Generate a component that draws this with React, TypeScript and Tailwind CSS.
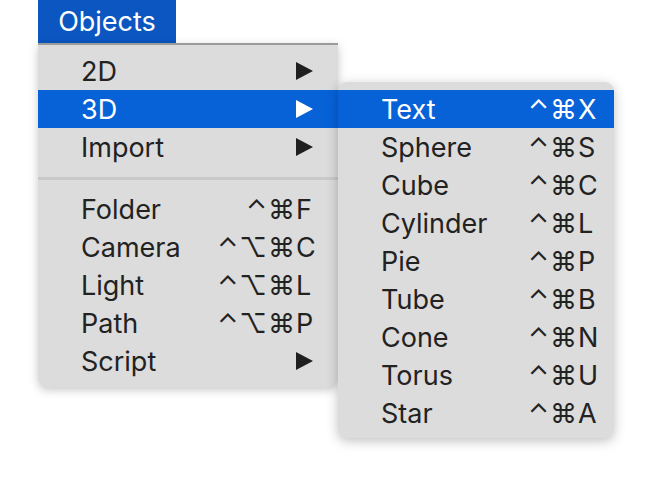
import React from "react";

const Arrow = ({ white }: { white?: boolean }) => (
  <svg width="17" height="18" viewBox="0 0 17 18" className="block">
    <path d="M0 0 L17 9 L0 18 Z" fill={white ? "#ffffff" : "#1f1f1f"} />
  </svg>
);

type Row = { label: string; mods?: string; key?: string; arrow?: boolean; active?: boolean };

const MainRow = ({ r }: { r: Row }) => (
  <div
    className={`h-[38px] flex items-center pl-[43px] pr-[19px] ${
      r.active ? "bg-[#0762d8] text-white" : "text-[#222222]"
    }`}
  >
    <span className="flex-1">{r.label}</span>
    {r.arrow ? (
      <span className="pr-[6px]">
        <Arrow white={r.active} />
      </span>
    ) : (
      <span className="flex items-center">
        <span className="text-right tracking-[1px]">{r.mods}</span>
        <span className="w-[23px] text-left">{r.key}</span>
      </span>
    )}
  </div>
);

const SubRow = ({ r }: { r: Row }) => (
  <div
    className={`h-[38px] flex items-center pl-[43px] pr-[13px] ${
      r.active ? "bg-[#0762d8] text-white" : "text-[#222222]"
    }`}
  >
    <span className="flex-1">{r.label}</span>
    <span className="flex items-center">
      <span className="text-right tracking-[1px]">{r.mods}</span>
      <span className="w-[23px] text-left">{r.key}</span>
    </span>
  </div>
);

export default function App() {
  const top: Row[] = [
    { label: "2D", arrow: true },
    { label: "3D", arrow: true, active: true },
    { label: "Import", arrow: true },
  ];
  const bottom: Row[] = [
    { label: "Folder", mods: "⌃⌘", key: "F" },
    { label: "Camera", mods: "⌃⌥⌘", key: "C" },
    { label: "Light", mods: "⌃⌥⌘", key: "L" },
    { label: "Path", mods: "⌃⌥⌘", key: "P" },
    { label: "Script", arrow: true },
  ];
  const sub: Row[] = [
    { label: "Text", mods: "⌃⌘", key: "X", active: true },
    { label: "Sphere", mods: "⌃⌘", key: "S" },
    { label: "Cube", mods: "⌃⌘", key: "C" },
    { label: "Cylinder", mods: "⌃⌘", key: "L" },
    { label: "Pie", mods: "⌃⌘", key: "P" },
    { label: "Tube", mods: "⌃⌘", key: "B" },
    { label: "Cone", mods: "⌃⌘", key: "N" },
    { label: "Torus", mods: "⌃⌘", key: "U" },
    { label: "Star", mods: "⌃⌘", key: "A" },
  ];
  return (
    <div className="w-[652px] h-[492px] bg-white overflow-hidden font-['Inter','DejaVu_Sans',sans-serif] text-[27px] leading-none">
      <div className="ml-[38px] w-[138px] h-[43px] bg-[#0b56c0] text-white flex items-center justify-center">
        Objects
      </div>
      <div className="flex items-start ml-[38px]">
        <div className="w-[300px] border-t-2 border-[#9b9b9b] bg-[#dcdcdc] rounded-b-[9px] shadow-[0_3px_10px_rgba(0,0,0,0.22)] pt-[7px] pb-[7px]">
          {top.map((r) => (
            <MainRow key={r.label} r={r} />
          ))}
          <div className="h-[24px] flex items-center">
            <div className="w-full h-[3px] bg-[#c9c9c9]" />
          </div>
          {bottom.map((r) => (
            <MainRow key={r.label} r={r} />
          ))}
        </div>
        <div className="relative z-10 mt-[39px] w-[276px] bg-[#dcdcdc] rounded-[9px] shadow-[0_3px_12px_rgba(0,0,0,0.25)] pt-[8px] pb-[6px] overflow-hidden">
          {sub.map((r) => (
            <SubRow key={r.label} r={r} />
          ))}
        </div>
      </div>
    </div>
  );
}
